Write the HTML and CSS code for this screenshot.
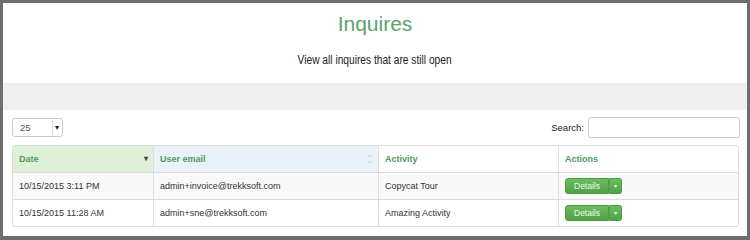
FILE: index.html
```html
<!DOCTYPE html>
<html lang="en">

<head>
  <meta charset="UTF-8" />
  <title>Inquires</title>
  <link rel="stylesheet" href="styles.css">
</head>

<body>
  <div class="frame">
    <header class="page-head">
      <h1>Inquires</h1>
      <p class="desc">View all inquires that are still open</p>
    </header>

    <div class="band"></div>

    <div class="controls">
      <div class="length">
        <span class="length-value">25</span>
        <span class="length-arrow">&#9662;</span>
      </div>
      <label class="search">Search: <span class="search-input"></span></label>
    </div>

    <table class="inquiries">
      <thead>
        <tr>
          <th class="col-date sorted">Date <span class="sort-desc">&#9662;</span></th>
          <th class="col-email sortable">User email
            <svg class="sort-both" width="8" height="12" viewBox="0 0 8 12">
              <path d="M1.5 4.5 L4 2 L6.5 4.5" fill="none" stroke="#c9d2da" stroke-width="1" />
              <path d="M1.5 7.5 L4 10 L6.5 7.5" fill="none" stroke="#c9d2da" stroke-width="1" />
            </svg>
          </th>
          <th class="col-activity">Activity</th>
          <th class="col-actions">Actions</th>
        </tr>
      </thead>
      <tbody>
        <tr>
          <td>10/15/2015 3:11 PM</td>
          <td>admin+invoice@trekksoft.com</td>
          <td>Copycat Tour</td>
          <td>
            <div class="btn-group">
              <span class="btn">Details</span><span class="btn caret">&#9662;</span>
            </div>
          </td>
        </tr>
        <tr>
          <td>10/15/2015 11:28 AM</td>
          <td>admin+sne@trekksoft.com</td>
          <td>Amazing Activity</td>
          <td>
            <div class="btn-group">
              <span class="btn">Details</span><span class="btn caret">&#9662;</span>
            </div>
          </td>
        </tr>
      </tbody>
    </table>
  </div>
</body>

</html>
```

FILE: styles.css
```css
* {
  margin: 0;
  padding: 0;
  box-sizing: border-box;
}

html,
body {
  width: 750px;
  height: 240px;
  overflow: hidden;
}

body {
  font-family: 'Liberation Sans', Arial, sans-serif;
  background: #6e6e6e;
  color: #333;
  padding: 3px 3px 4px 3px;
}

.frame {
  background: #fff;
  height: 233px;
  overflow: hidden;
}

.page-head {
  text-align: center;
  padding-top: 8px;
  height: 80px;
}

h1 {
  font-size: 21px;
  font-weight: 400;
  color: #5aa36e;
  line-height: 26px;
}

/* the original font is a condensed one, so squeeze the line a little */
.desc {
  display: inline-block;
  font-size: 12px;
  color: #222;
  margin-top: 16px;
  transform: scaleX(0.85);
}

.band {
  background: #efefef;
  height: 27px;
}

.controls {
  display: flex;
  justify-content: space-between;
  align-items: center;
  padding: 4px 7px 0 9px;
  height: 30px;
}

.length {
  display: flex;
  align-items: center;
  justify-content: space-between;
  width: 51px;
  height: 19px;
  border: 1px solid #ccc;
  border-radius: 3px;
  padding: 0 2px 0 7px;
  font-size: 9.5px;
  color: #555;
}

.length-arrow {
  font-size: 8px;
  width: 8px;
  height: 15px;
  line-height: 15px;
  text-align: center;
  border-left: 1px solid #ddd;
  color: #222;
}

.search {
  display: flex;
  align-items: center;
  gap: 4px;
  font-size: 9.5px;
  color: #222;
}

.search-input {
  display: block;
  width: 152px;
  height: 21px;
  border: 1px solid #ccc;
  border-radius: 3px;
}

.inquiries {
  margin: 5px 8px 0 9px;
  width: 727px;
  border-collapse: separate;
  border-spacing: 0;
  border: 1px solid #ddd;
  border-radius: 3px;
  font-size: 9px;
  table-layout: fixed;
}

.inquiries th,
.inquiries td {
  text-align: left;
  padding: 0 6px;
  border-left: 1px solid #ddd;
}

.inquiries th:first-child,
.inquiries td:first-child {
  border-left: none;
}

.inquiries th {
  height: 26px;
  color: #4f9a62;
  font-weight: 700;
  position: relative;
}

.inquiries td {
  height: 27px;
  border-top: 1px solid #ddd;
  color: #333;
}

.inquiries tbody tr:first-child td {
  background: #f9f9f9;
}

.col-date {
  width: 140px;
  background: #dff0d8;
}

.col-email {
  width: 225px;
  background: #e9f2f9;
}

.col-activity {
  width: 180px;
}

.sort-desc {
  position: absolute;
  right: 5px;
  top: 8px;
  font-size: 8px;
  color: #444;
}

.sort-both {
  position: absolute;
  right: 4px;
  top: 7px;
}

.btn-group {
  display: flex;
}

.btn {
  display: block;
  height: 16px;
  line-height: 15px;
  background: linear-gradient(#6abd5d, #51a146);
  color: #eef7ec;
  font-size: 8.5px;
  padding: 0 8px;
  border: 1px solid #4b9b41;
  border-radius: 3px 0 0 3px;
}

.btn.caret {
  font-size: 6px;
  padding: 0 4px;
  border-left-color: #5aa84e;
  border-radius: 0 3px 3px 0;
}
```
